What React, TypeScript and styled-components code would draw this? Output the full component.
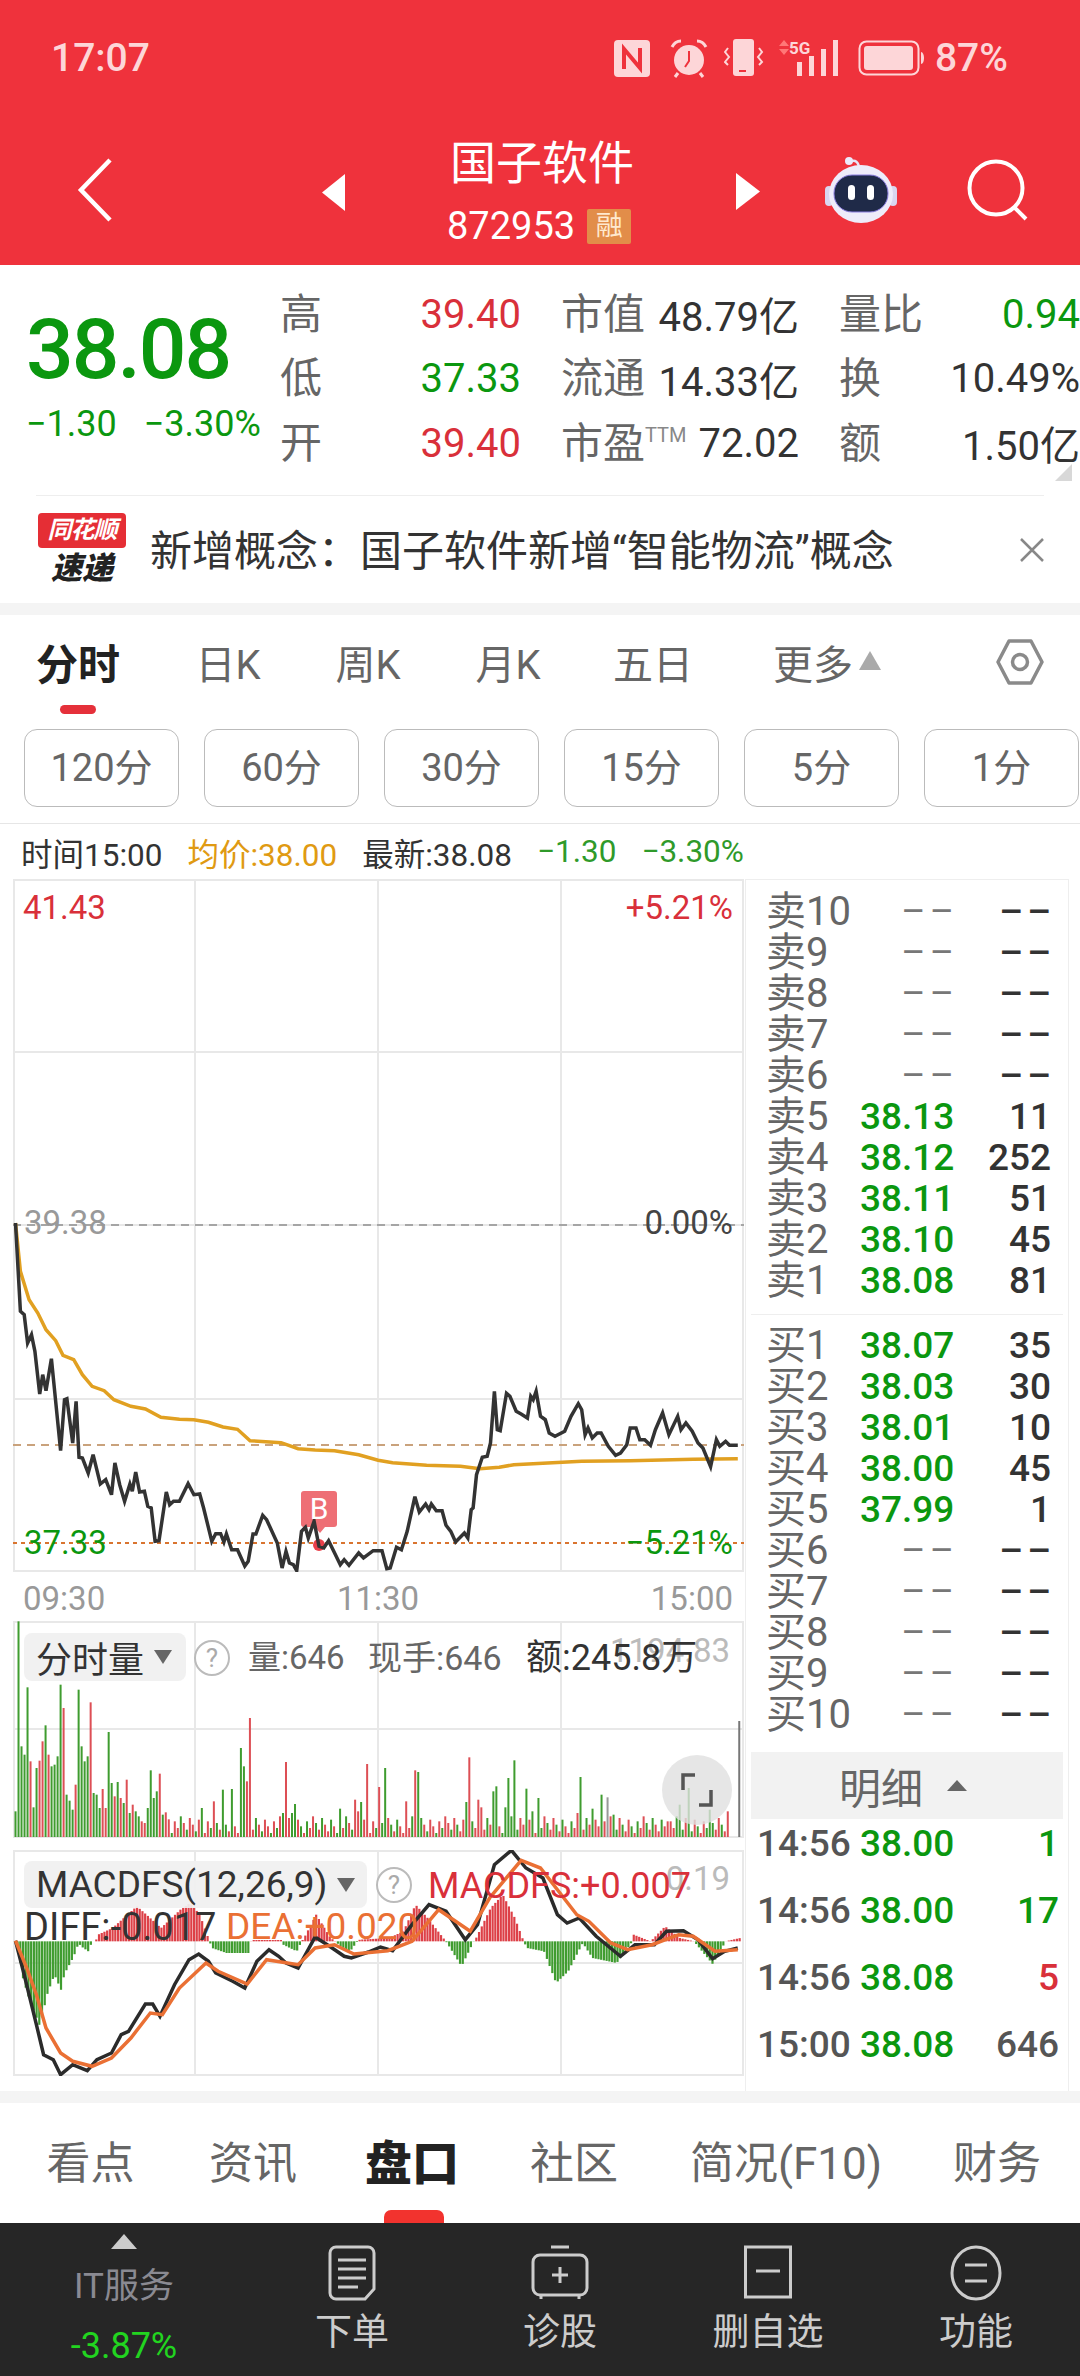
import React from "react";
import styled, { createGlobalStyle } from "styled-components";

const GREEN = "#0b970f";
const RED = "#d9303a";
const GRAY = "#666";
const FONT = `Roboto, "Noto Sans CJK SC", sans-serif`;

const GlobalStyle = createGlobalStyle`
  html, body { margin: 0; padding: 0; background: #fff; }
  body { width: 1080px; height: 2376px; overflow: hidden; font-family: ${FONT}; }
  * { box-sizing: border-box; }
`;

const pricePts = [32,315,42,580,50,590,57,675,65,650,72,700,82,828,88,770,95,818,106,722,125,998,133,845,138,842,150,975,157,850,163,1018,170,1020,182,1065,192,1010,207,1098,218,1085,230,1130,237,1035,247,1100,257,1150,268,1098,273,1120,280,1062,288,1122,298,1120,305,1165,312,1170,320,1270,328,1268,343,1122,350,1160,358,1150,370,1150,388,1097,400,1130,412,1128,420,1170,437,1270,445,1247,455,1247,462,1272,467,1248,478,1295,490,1295,505,1344,512,1330,522,1248,528,1248,542,1192,550,1205,572,1275,582,1350,590,1300,597,1335,605,1340,612,1358,622,1240,630,1228,636,1260,648,1210,658,1285,668,1290,678,1268,688,1298,702,1340,710,1325,720,1342,740,1305,750,1320,770,1298,788,1298,798,1352,805,1350,818,1288,828,1295,840,1240,856,1136,865,1182,878,1158,885,1175,890,1158,900,1178,912,1178,920,1222,930,1240,940,1272,958,1245,965,1260,972,1175,976,1170,983,1070,995,1018,1005,1015,1012,975,1020,820,1026,935,1032,938,1045,826,1052,835,1065,880,1075,888,1088,900,1095,835,1100,845,1106,820,1115,895,1125,905,1133,945,1145,955,1165,940,1178,895,1193,857,1200,875,1207,950,1213,930,1222,960,1232,945,1240,945,1255,985,1270,1012,1280,1005,1293,980,1300,930,1312,930,1320,965,1330,965,1342,982,1352,935,1367,885,1380,950,1398,895,1405,935,1415,915,1428,940,1440,975,1450,990,1466,1046,1478,965,1485,985,1497,970,1505,982,1522,982];
const avgPts = [32,315,42,460,60,545,78,585,95,635,115,668,130,712,152,725,170,770,190,805,215,818,235,845,270,865,300,873,332,898,370,904,400,905,430,913,460,927,490,934,516,968,580,974,615,992,650,996,690,998,740,1010,780,1027,810,1034,880,1042,950,1045,990,1052,1030,1048,1060,1040,1100,1037,1200,1030,1300,1028,1430,1024,1522,1022];
const diffPts = [32,1028,50,1130,75,1280,90,1370,110,1385,125,1430,150,1400,180,1418,200,1385,230,1365,250,1310,265,1300,300,1218,315,1218,330,1255,360,1160,390,1085,410,1068,430,1090,445,1125,480,1150,505,1170,530,1090,555,1055,575,1075,590,1095,615,1110,650,1017,680,1045,710,1075,725,1080,760,1062,785,1047,810,1058,850,980,885,920,920,940,960,1025,985,980,1020,800,1055,757,1085,810,1120,840,1150,950,1170,975,1195,960,1230,1015,1280,1075,1310,1040,1350,1040,1375,1000,1410,998,1440,1025,1470,1082,1495,1060,1522,1050];
const deaPts = [32,1028,55,1110,75,1190,95,1290,125,1365,150,1390,190,1405,230,1380,270,1320,310,1245,335,1250,370,1170,425,1095,450,1120,510,1158,550,1085,615,1100,650,1050,690,1040,730,1068,800,1058,850,1030,905,935,930,960,970,1000,1010,900,1075,787,1115,810,1190,950,1215,970,1260,1035,1295,1055,1345,1040,1400,1010,1430,1015,1475,1060,1522,1055];
const histEnvelope = [32,1030,45,1140,55,1190,80,1285,95,1190,110,1130,125,1180,130,1130,150,1075,160,1035,165,1045,180,1060,188,1030,195,1030,200,1010,230,990,280,925,300,950,330,990,370,935,390,915,410,950,430,1030,435,1050,465,1065,510,1065,515,1030,520,1026,580,1026,582,1040,610,1060,620,1030,625,1020,650,950,680,1020,690,1030,700,1045,720,1060,735,1030,740,1025,800,1020,830,1000,855,920,880,960,915,1025,920,1035,950,1105,975,1030,980,1020,1010,930,1035,890,1060,960,1078,1030,1085,1050,1120,1060,1145,1155,1170,1120,1200,1035,1220,1080,1270,1095,1300,1035,1305,1010,1340,1030,1370,985,1400,1020,1430,1030,1435,1040,1468,1098,1495,1030,1500,1028,1525,1020];
const volPeaks: [string, number, number][] = [["g",38,70],["g",44,445],["g",50,470],["g",57,268],["r",62,490],["g",68,628],["g",75,510],["r",81,488],["r",88,430],["g",94,382],["r",100,470],["g",106,505],["g",112,500],["g",119,475],["g",125,260],["r",131,330],["g",137,590],["g",143,608],["g",150,635],["r",156,560],["g",162,275],["g",168,445],["g",175,490],["g",181,475],["r",187,313],["g",193,585],["g",199,590],["g",205,630],["r",212,573],["r",218,630],["g",225,402],["g",231,555],["r",237,595],["g",243,552],["r",250,600],["g",256,615],["r",262,545],["g",268,645],["r",275,620],["g",281,640],["g",287,655],["r",293,670],["r",300,675],["g",306,630],["g",312,517],["g",318,600],["g",324,580],["r",330,527],["g",336,650],["r",343,643],["g",416,630],["r",441,610],["g",460,575],["g",478,573],["g",497,450],["g",503,505],["r",510,550],["r",517,360],["g",584,645],["r",591,492],["g",603,645],["g",610,618],["g",702,632],["r",733,605],["r",740,640],["g",746,612],["r",758,498],["r",784,567],["g",796,510],["r",840,610],["r",857,517],["g",863,522],["g",964,612],["r",970,478],["r",987,605],["r",995,628],["g",1018,580],["g",1024,565],["g",1044,628],["g",1050,540],["g",1063,487],["g",1087,572],["g",1100,640],["g",1113,600],["r",1192,645],["g",1200,537],["g",1225,632],["g",1244,590],["n",1255,598],["g",1268,650],["r",1380,670],["g",1403,620],["g",1423,570],["g",1466,635],["r",1500,640]];

const zx = (x: number) => x / 2.063 - 13;
const toPath = (pts: number[], dy: number) => {
  let out = "";
  for (let i = 0; i < pts.length; i += 2) {
    out += `${zx(pts[i]).toFixed(1)},${(pts[i + 1] / 3 + dy).toFixed(1)} `;
  }
  return out;
};

const volBars = (() => {
  const map = new Map<number, [string, number]>();
  volPeaks.forEach(([c, x, y]) => map.set(Math.round((x - 32) / 6.2), [c, y]));
  const bars: { x: number; y: number; c: string }[] = [];
  for (let i = 0; i < 238; i++) {
    const x = 32 + i * 6.2;
    const p = map.get(i);
    const h = (i * 37) % 11;
    const small = x < 350 ? 640 + h * 4 : 655 + h * 5;
    const c = p ? p[0] : (i * 13) % 5 < 2 ? "g" : "r";
    bars.push({ x, y: p ? p[1] : small, c });
  }
  return bars;
})();
const volColor: Record<string, string> = { g: "#3f9c2f", r: "#dd4f55", n: "#999" };

const histBars = (() => {
  const bars: { x: number; y: number }[] = [];
  for (let x = 34; x < 1525; x += 5.6) {
    let j = 0;
    while (j < histEnvelope.length - 4 && histEnvelope[j + 2] < x) j += 2;
    const t = (x - histEnvelope[j]) / (histEnvelope[j + 2] - histEnvelope[j]);
    bars.push({ x, y: histEnvelope[j + 1] + (histEnvelope[j + 3] - histEnvelope[j + 1]) * Math.min(1, Math.max(0, t)) });
  }
  return bars;
})();

const Page = styled.div`
  width: 1080px;
  height: 2376px;
  display: flex;
  flex-direction: column;
  overflow: hidden;
  background: #fff;
`;

const Header = styled.header`
  height: 265px;
  background: #ef323c;
  flex: none;
`;

const StatusBar = styled.div`
  height: 116px;
  padding: 0 72px 0 51px;
  display: flex;
  align-items: center;
  justify-content: space-between;
  color: #fdd6d8;
  font-size: 39px;
  font-weight: 500;
`;

const StatusIcons = styled.div`
  display: flex;
  align-items: center;
  gap: 9px;
  svg { display: block; }
`;

const StatusIcon = styled.svg<{ $gap: number }>`
  margin-left: ${(p) => p.$gap}px;
`;

const NavRow = styled.div`
  height: 150px;
  display: flex;
  align-items: center;
  padding-left: 77px;
`;

const NavIcon = styled.svg<{ $gap: number; $up?: number }>`
  flex: none;
  display: block;
  margin-left: ${(p) => p.$gap}px;
  margin-top: ${(p) => p.$up ?? 0}px;
`;

const TitleBlock = styled.div`
  flex: none;
  width: 190px;
  margin-left: 102px;
  color: #fff;
`;

const Title = styled.div`
  font-size: 46px;
  line-height: 60px;
  text-align: center;
  white-space: nowrap;
`;

const CodeRow = styled.div`
  display: flex;
  align-items: center;
  gap: 12px;
  font-size: 38px;
  line-height: 46px;
  margin-top: 10px;
`;

const Badge = styled.span`
  width: 44px;
  height: 35px;
  background: #e28d49;
  border-radius: 2px;
  font-size: 27px;
  line-height: 35px;
  text-align: center;
  color: #ffe9cf;
`;

const Quote = styled.section`
  height: 230px;
  flex: none;
  position: relative;
  display: flex;
  padding-top: 17px;
`;

const BigPrice = styled.div`
  width: 280px;
  flex: none;
  padding-left: 26px;
`;

const BigNum = styled.div`
  color: ${GREEN};
  font-size: 84px;
  font-weight: 500;
  line-height: 100px;
  margin-top: 18px;
  letter-spacing: -2px;
`;

const Change = styled.div`
  display: flex;
  gap: 27px;
  color: ${GREEN};
  font-size: 36px;
  line-height: 40px;
  margin-top: 4px;
  white-space: nowrap;
`;

const StatGrid = styled.div`
  display: grid;
  grid-template-columns: 241px 238px 241px;
  grid-auto-rows: 64.5px;
  column-gap: 40px;
  width: 800px;
`;

const Stat = styled.div`
  display: flex;
  align-items: center;
  justify-content: space-between;
  white-space: nowrap;
`;

const StatLabel = styled.span`
  color: ${GRAY};
  font-size: 42px;
  padding-bottom: 8px;
`;

const Ttm = styled.sup`
  font-size: 20px;
  color: #888;
  vertical-align: 16px;
  line-height: 0;
`;

const StatValue = styled.span<{ $color?: string }>`
  color: ${(p) => p.$color ?? "#333"};
  font-size: 40px;
`;

const Corner = styled.div`
  position: absolute;
  right: 8px;
  bottom: 14px;
  width: 0;
  height: 0;
  border-left: 17px solid transparent;
  border-bottom: 17px solid #d8d8d8;
`;

const Notice = styled.div`
  margin: 0 36px;
  height: 108px;
  border-top: 1px solid #eee;
  display: flex;
  align-items: center;
  flex: none;
  position: relative;
`;

const LogoBox = styled.div`
  width: 90px;
  margin-left: 1px;
  flex: none;
  display: flex;
  flex-direction: column;
  align-items: center;
`;

const LogoTop = styled.div`
  width: 88px;
  height: 35px;
  border-radius: 4px;
  background: #e52e35;
  color: #fff;
  font-size: 24px;
  line-height: 35px;
  font-weight: 700;
  font-style: italic;
  text-align: center;
  white-space: nowrap;
  letter-spacing: -1px;
`;

const LogoBottom = styled.div`
  font-size: 31px;
  line-height: 36px;
  font-weight: 900;
  font-style: italic;
  color: #222;
  margin-top: 3px;
`;

const NoticeText = styled.div`
  margin-left: 23px;
  font-size: 42px;
  color: #333;
  white-space: nowrap;
  flex: 1;
  margin-top: -4px;
`;

const Close = styled.svg`
  flex: none;
  margin-right: 0;
`;

const Band = styled.div<{ $h: number }>`
  height: ${(p) => p.$h}px;
  background: #f4f4f4;
  flex: none;
`;

const Gap = styled.div`
  height: 12px;
  flex: none;
`;

const PeriodTabs = styled.nav`
  height: 114px;
  flex: none;
  position: relative;
  display: flex;
  align-items: flex-start;
  padding-top: 22px;
`;

const PeriodTab = styled.div<{ $w: number; $active?: boolean; $shift?: number }>`
  width: ${(p) => p.$w}px;
  flex: none;
  text-align: center;
  font-size: ${(p) => (p.$active ? 42 : 40)}px;
  line-height: 58px;
  color: ${(p) => (p.$active ? "#222" : GRAY)};
  font-weight: ${(p) => (p.$active ? 700 : 400)};
  white-space: nowrap;
  padding-left: ${(p) => p.$shift ?? 0}px;
`;

const MoreArrow = styled.span`
  display: inline-block;
  width: 0;
  height: 0;
  margin-left: 6px;
  vertical-align: 9px;
  border-left: 11px solid transparent;
  border-right: 11px solid transparent;
  border-bottom: 19px solid #aaa;
`;

const ActiveMark = styled.div`
  position: absolute;
  left: 60px;
  top: 90px;
  width: 36px;
  height: 9px;
  border-radius: 5px;
  background: #e5303a;
`;

const HexIcon = styled.svg`
  position: absolute;
  left: 996px;
  top: 24px;
`;

const Intervals = styled.div`
  display: flex;
  gap: 25px;
  padding-left: 24px;
  height: 95px;
  flex: none;
  border-bottom: 1px solid #e6e6e6;
  width: 1080px;
`;

const IntervalBtn = styled.div`
  flex: none;
  width: 155px;
  height: 78px;
  border: 1px solid #bbb;
  border-radius: 13px;
  color: ${GRAY};
  font-size: 38px;
  line-height: 76px;
  text-align: center;
`;

const InfoRow = styled.div`
  height: 55px;
  flex: none;
  display: flex;
  align-items: center;
  padding-left: 21px;
  font-size: 31.5px;
  color: #333;
  white-space: nowrap;
`;

const InfoItem = styled.span<{ $color?: string; $gap?: number }>`
  color: ${(p) => p.$color ?? "#333"};
  margin-right: ${(p) => p.$gap ?? 25}px;
`;

const Body = styled.div`
  flex: 1;
  display: flex;
  padding-left: 13px;
  min-height: 0;
`;

const ChartColumn = styled.div`
  width: 731px;
  flex: none;
  display: flex;
  flex-direction: column;
`;

const Panel = styled.div<{ $h: number }>`
  position: relative;
  height: ${(p) => p.$h}px;
  flex: none;
  svg.plot { display: block; position: absolute; left: 0; top: 0; }
`;

const Tag = styled.span<{ $left?: number; $right?: number; $top: number; $color: string; $size?: number }>`
  position: absolute;
  ${(p) => (p.$left !== undefined ? `left: ${p.$left}px;` : "")}
  ${(p) => (p.$right !== undefined ? `right: ${p.$right}px;` : "")}
  top: ${(p) => p.$top}px;
  color: ${(p) => p.$color};
  font-size: ${(p) => p.$size ?? 33}px;
  line-height: 40px;
  white-space: nowrap;
`;

const AxisRow = styled.div`
  height: 49px;
  flex: none;
  display: flex;
  justify-content: space-between;
  align-items: center;
  padding: 4px 11px 0 10px;
  color: #999;
  font-size: 33px;
`;

const DropDown = styled.div<{ $top: number; $w: number; $h: number; $size: number }>`
  position: absolute;
  left: 11px;
  top: ${(p) => p.$top}px;
  width: ${(p) => p.$w}px;
  height: ${(p) => p.$h}px;
  background: rgba(240, 240, 240, 0.92);
  border-radius: 8px;
  display: flex;
  align-items: center;
  padding-left: 12px;
  color: #333;
  font-size: ${(p) => p.$size}px;
  white-space: nowrap;
`;

const DropCaret = styled.span`
  width: 0;
  height: 0;
  margin-left: 10px;
  border-left: 9px solid transparent;
  border-right: 9px solid transparent;
  border-top: 14px solid #666;
`;

const Help = styled.span<{ $left: number; $top: number }>`
  position: absolute;
  left: ${(p) => p.$left}px;
  top: ${(p) => p.$top}px;
  width: 36px;
  height: 36px;
  border: 2px solid #bbb;
  border-radius: 50%;
  color: #aaa;
  font-size: 26px;
  line-height: 32px;
  text-align: center;
  background: #fff;
`;

const Expand = styled.div`
  position: absolute;
  left: 649px;
  top: 134px;
  width: 70px;
  height: 70px;
  border-radius: 50%;
  background: rgba(224, 224, 224, 0.8);
  display: flex;
  align-items: center;
  justify-content: center;
`;

const Book = styled.aside`
  width: 324px;
  margin-left: 1px;
  flex: none;
  border: 1px solid #eee;
  border-bottom: none;
  display: flex;
  flex-direction: column;
  padding: 11px 5px 0;
`;

const BookGroup = styled.div<{ $line?: boolean }>`
  ${(p) => (p.$line ? "border-top: 1px solid #eee; margin-top: 13px; padding-top: 10px;" : "")}
`;

const BookRow = styled.div`
  height: 41px;
  display: grid;
  grid-template-columns: 94px 94px 1fr;
  align-items: center;
  padding: 0 12px 0 15px;
  font-size: 37px;
  line-height: 41px;
  white-space: nowrap;
`;

const BookLabel = styled.span`
  color: ${GRAY};
  font-size: 40px;
`;

const BookPrice = styled.span<{ $dash?: boolean }>`
  color: ${(p) => (p.$dash ? "#777" : GREEN)};
  text-align: right;
  font-weight: ${(p) => (p.$dash ? 400 : 500)};
  word-spacing: ${(p) => (p.$dash ? "-5px" : "0")};
`;

const BookQty = styled.span<{ $dash?: boolean }>`
  color: #333;
  text-align: right;
  font-weight: 500;
  word-spacing: ${(p) => (p.$dash ? "-5px" : "0")};
`;

const DetailHead = styled.div`
  height: 67px;
  margin-top: 17px;
  background: #f2f2f2;
  color: ${GRAY};
  font-size: 42px;
  display: flex;
  align-items: center;
  justify-content: center;
  gap: 24px;
  padding-right: 8px;
  flex: none;
`;

const HeadCaret = styled.span`
  width: 0;
  height: 0;
  border-left: 10px solid transparent;
  border-right: 10px solid transparent;
  border-bottom: 11px solid #666;
`;

const DetailList = styled.div`
  margin-top: -9px;
`;

const DetailRow = styled.div`
  height: 67px;
  display: flex;
  align-items: center;
  padding: 0 4px 0 6px;
  font-size: 37px;
  font-weight: 500;
  white-space: nowrap;
`;

const DetailTime = styled.span`
  color: #555;
  width: 103px;
`;

const DetailPrice = styled.span`
  color: ${GREEN};
`;

const DetailQty = styled.span<{ $color: string }>`
  color: ${(p) => p.$color};
  margin-left: auto;
`;

const SubTabs = styled.nav`
  height: 120px;
  flex: none;
  position: relative;
  display: flex;
  align-items: flex-start;
  padding-top: 31px;
`;

const SubTab = styled.div<{ $w: number; $active?: boolean }>`
  width: ${(p) => p.$w}px;
  flex: none;
  text-align: center;
  font-size: ${(p) => (p.$active ? 47 : 44)}px;
  line-height: 60px;
  color: ${(p) => (p.$active ? "#222" : GRAY)};
  font-weight: ${(p) => (p.$active ? 900 : 400)};
  white-space: nowrap;
`;

const SubMark = styled.div`
  position: absolute;
  left: 384px;
  bottom: 0;
  width: 60px;
  height: 13px;
  border-radius: 7px 7px 0 0;
  background: #f2332e;
`;

const BottomBar = styled.footer`
  height: 153px;
  flex: none;
  background: #262626;
  display: flex;
`;

const SectorCell = styled.div`
  width: 248px;
  flex: none;
  display: flex;
  flex-direction: column;
  align-items: center;
  padding-top: 11px;
`;

const SectorArrow = styled.div`
  width: 0;
  height: 0;
  border-left: 13px solid transparent;
  border-right: 13px solid transparent;
  border-bottom: 15px solid #ccc;
`;

const SectorName = styled.div`
  color: #8a8a92;
  font-size: 35px;
  line-height: 44px;
  margin-top: 16px;
`;

const SectorPct = styled.div`
  color: #22d420;
  font-size: 36px;
  line-height: 40px;
  margin-top: 17px;
`;

const Action = styled.div`
  width: 208px;
  flex: none;
  display: flex;
  flex-direction: column;
  align-items: center;
  padding-top: 22px;
  color: #ccc;
  font-size: 37px;
  line-height: 48px;
  svg { display: block; height: 56px; margin-bottom: 8px; }
`;

const sells = [["卖10","--","--"],["卖9","--","--"],["卖8","--","--"],["卖7","--","--"],["卖6","--","--"],["卖5","38.13","11"],["卖4","38.12","252"],["卖3","38.11","51"],["卖2","38.10","45"],["卖1","38.08","81"]];
const buys = [["买1","38.07","35"],["买2","38.03","30"],["买3","38.01","10"],["买4","38.00","45"],["买5","37.99","1"],["买6","--","--"],["买7","--","--"],["买8","--","--"],["买9","--","--"],["买10","--","--"]];
const details: [string, string, string, string][] = [["14:56","38.00","1",GREEN],["14:56","38.00","17",GREEN],["14:56","38.08","5",RED],["15:00","38.08","646","#555"]];

function BookLines({ rows }: { rows: string[][] }) {
  return (
    <>
      {rows.map((r) => (
        <BookRow key={r[0]}>
          <BookLabel>{r[0]}</BookLabel>
          <BookPrice $dash={r[1] === "--"}>{r[1] === "--" ? "– –" : r[1]}</BookPrice>
          <BookQty $dash={r[2] === "--"}>{r[2] === "--" ? "– –" : r[2]}</BookQty>
        </BookRow>
      ))}
    </>
  );
}

function Grid({ w, h, rows }: { w: number; h: number; rows: number[] }) {
  return (
    <g stroke="#e8e8e8" strokeWidth="2" fill="none">
      <rect x="1" y="1" width={w - 2} height={h - 2} />
      {[182, 365, 548].map((x) => <line key={x} x1={x} y1="0" x2={x} y2={h} />)}
      {rows.map((y) => <line key={y} x1="0" y1={y} x2={w} y2={y} />)}
    </g>
  );
}

function Robot() {
  return (
    <NavIcon $gap={65} $up={-2} width="72" height="68" viewBox="0 0 72 68">
      <path d="M25 6c5-3 9 0 9 7" stroke="#e7e4f8" strokeWidth="2.5" fill="none" />
      <circle cx="24" cy="5" r="4" fill="#ece9fa" />
      <rect x="0" y="30" width="8" height="20" rx="4" fill="#d9d6f0" />
      <rect x="64" y="30" width="8" height="20" rx="4" fill="#d9d6f0" />
      <ellipse cx="36" cy="38" rx="32" ry="29" fill="#eeecfa" />
      <rect x="9" y="19" width="54" height="37" rx="18" fill="#1f2a48" stroke="#8c7fe0" strokeWidth="1" />
      <rect x="23" y="29" width="7" height="15" rx="3.5" fill="#fff" />
      <rect x="42" y="29" width="7" height="15" rx="3.5" fill="#fff" />
    </NavIcon>
  );
}

export default function App() {
  return (
    <Page>
      <GlobalStyle />
      <Header>
        <StatusBar>
          <span>17:07</span>
          <StatusIcons>
            <StatusIcon $gap={0} width="36" height="37" viewBox="0 0 36 37">
              <rect width="36" height="37" rx="4" fill="#fdd6d8" />
              <path d="M10 29V9l16 19V8" stroke="#ef323c" strokeWidth="4" fill="none" />
            </StatusIcon>
            <StatusIcon $gap={10} width="40" height="40" viewBox="0 0 40 40">
              <circle cx="20" cy="22" r="15" fill="#fdd6d8" />
              <path d="M20 13v10l-4 6" stroke="#ef323c" strokeWidth="2" fill="none" />
              <path d="M3 9c2-4 6-6 9-6M37 9c-2-4-6-6-9-6M9 35l-3 4M31 35l3 4" stroke="#fdd6d8" strokeWidth="3" fill="none" />
            </StatusIcon>
            <StatusIcon $gap={6} width="40" height="38" viewBox="0 0 40 38">
              <rect x="9" y="0" width="21" height="37" rx="3" fill="#fdd6d8" />
              <path d="M15 32h7" stroke="#ef323c" strokeWidth="2" />
              <path d="M4 9l-3 4 4 5-4 5 3 3M35 9l3 4-4 5 4 5-3 3" stroke="#fdd6d8" strokeWidth="2" fill="none" />
            </StatusIcon>
            <StatusIcon $gap={1} width="66" height="38" viewBox="0 0 66 38">
              <path d="M5 7l5-6 5 6zM5 10l5 6 5-6z" fill="#f77" />
              <text x="15" y="15" fontSize="17" fontWeight="700" fontFamily="Roboto" fill="#fdd6d8">5G</text>
              <rect x="23" y="23" width="5" height="14" fill="#fdd6d8" />
              <rect x="35" y="17" width="5" height="20" fill="#fdd6d8" />
              <rect x="47" y="10" width="5" height="27" fill="#fdd6d8" />
              <rect x="59" y="1" width="5" height="36" fill="#fdd6d8" />
            </StatusIcon>
            <StatusIcon $gap={9} width="68" height="36" viewBox="0 0 68 36">
              <rect x="1.5" y="1.5" width="59" height="33" rx="7" fill="none" stroke="#fdd6d8" strokeWidth="2" />
              <rect x="6" y="6" width="49" height="24" rx="3" fill="#fdd6d8" />
              <path d="M63 12c4 0 4 12 0 12z" fill="#fdd6d8" />
            </StatusIcon>
            <span>87%</span>
          </StatusIcons>
        </StatusBar>
        <NavRow>
          <NavIcon $gap={0} $up={-2} width="36" height="64" viewBox="0 0 36 64">
            <path d="M33 2L4 32l29 30" stroke="#fff" strokeWidth="4.5" fill="none" />
          </NavIcon>
          <NavIcon $gap={209} $up={2} width="23" height="37" viewBox="0 0 23 37">
            <path d="M23 0L0 18.5 23 37z" fill="#fff" />
          </NavIcon>
          <TitleBlock>
            <Title>国子软件</Title>
            <CodeRow>872953<Badge>融</Badge></CodeRow>
          </TitleBlock>
          <NavIcon $gap={99} $up={0} width="24" height="37" viewBox="0 0 24 37">
            <path d="M0 0l24 18.5L0 37z" fill="#fff" />
          </NavIcon>
          <Robot />
          <NavIcon $gap={70} $up={-2} width="62" height="62" viewBox="0 0 62 62">
            <circle cx="29" cy="29" r="26.5" stroke="#fff" strokeWidth="4" fill="none" />
            <path d="M47 48l12 12" stroke="#fff" strokeWidth="4" />
          </NavIcon>
        </NavRow>
      </Header>

      <Quote>
        <BigPrice>
          <BigNum>38.08</BigNum>
          <Change><span>−1.30</span><span>−3.30%</span></Change>
        </BigPrice>
        <StatGrid>
          <Stat><StatLabel>高</StatLabel><StatValue $color={RED}>39.40</StatValue></Stat>
          <Stat><StatLabel>市值</StatLabel><StatValue>48.79亿</StatValue></Stat>
          <Stat><StatLabel>量比</StatLabel><StatValue $color={GREEN}>0.94</StatValue></Stat>
          <Stat><StatLabel>低</StatLabel><StatValue $color={GREEN}>37.33</StatValue></Stat>
          <Stat><StatLabel>流通</StatLabel><StatValue>14.33亿</StatValue></Stat>
          <Stat><StatLabel>换</StatLabel><StatValue>10.49%</StatValue></Stat>
          <Stat><StatLabel>开</StatLabel><StatValue $color={RED}>39.40</StatValue></Stat>
          <Stat><StatLabel>市盈<Ttm>TTM</Ttm></StatLabel><StatValue>72.02</StatValue></Stat>
          <Stat><StatLabel>额</StatLabel><StatValue>1.50亿</StatValue></Stat>
        </StatGrid>
        <Corner />
      </Quote>

      <Notice>
        <LogoBox>
          <LogoTop>同花顺</LogoTop>
          <LogoBottom>速递</LogoBottom>
        </LogoBox>
        <NoticeText>新增概念：国子软件新增“智能物流”概念</NoticeText>
        <Close width="24" height="24" viewBox="0 0 24 24">
          <path d="M1 1l22 22M23 1L1 23" stroke="#888" strokeWidth="2.5" />
        </Close>
      </Notice>
      <Band $h={12} />

      <PeriodTabs>
        <PeriodTab $w={156} $active>分时</PeriodTab>
        <PeriodTab $w={144}>日K</PeriodTab>
        <PeriodTab $w={136}>周K</PeriodTab>
        <PeriodTab $w={144}>月K</PeriodTab>
        <PeriodTab $w={146}>五日</PeriodTab>
        <PeriodTab $w={170} $shift={32}>更多<MoreArrow /></PeriodTab>
        <ActiveMark />
        <HexIcon width="48" height="46" viewBox="0 0 48 46">
          <path d="M13 2h22l11 21-11 21H13L2 23z" stroke="#8a8a8a" strokeWidth="3.5" fill="none" strokeLinejoin="round" />
          <circle cx="24" cy="23" r="7.5" stroke="#8a8a8a" strokeWidth="3.5" fill="none" />
        </HexIcon>
      </PeriodTabs>

      <Intervals>
        {["120分", "60分", "30分", "15分", "5分", "1分"].map((t) => (
          <IntervalBtn key={t}>{t}</IntervalBtn>
        ))}
      </Intervals>

      <InfoRow>
        <InfoItem>时间15:00</InfoItem>
        <InfoItem $color="#e09a12">均价:38.00</InfoItem>
        <InfoItem>最新:38.08</InfoItem>
        <InfoItem $color="#2f9a2a">−1.30</InfoItem>
        <InfoItem $color="#2f9a2a">−3.30%</InfoItem>
      </InfoRow>

      <Body>
        <ChartColumn>
          <Panel $h={693}>
            <svg className="plot" width="731" height="693" viewBox="0 0 731 693">
              <Grid w={731} h={693} rows={[173, 346, 520]} />
              <line x1="0" y1="346" x2="731" y2="346" stroke="#a5a5a5" strokeWidth="2" strokeDasharray="8 6" />
              <line x1="0" y1="566" x2="731" y2="566" stroke="#c9a27c" strokeWidth="2" strokeDasharray="8 6" />
              <line x1="0" y1="664" x2="731" y2="664" stroke="#d9742f" strokeWidth="2" strokeDasharray="4 4" />
              <polyline points={toPath(avgPts, 239)} fill="none" stroke="#e1a021" strokeWidth="3.5" />
              <path d="M288 615a3 3 0 0 1 3-3h30a3 3 0 0 1 3 3v30a3 3 0 0 1-3 3h-9l-5 6-5-6h-11a3 3 0 0 1-3-3z" fill="#ee6f75" />
              <circle cx="306" cy="666" r="6" fill="#e9404a" />
              <polyline points={toPath(pricePts, 239)} fill="none" stroke="#333" strokeWidth="3.5" />
            </svg>
            <Tag $left={10} $top={9} $color={RED}>41.43</Tag>
            <Tag $right={11} $top={9} $color={RED}>+5.21%</Tag>
            <Tag $left={11} $top={324} $color="#999">39.38</Tag>
            <Tag $right={11} $top={324} $color="#444">0.00%</Tag>
            <Tag $left={11} $top={644} $color={GREEN}>37.33</Tag>
            <Tag $right={11} $top={644} $color={GREEN}>−5.21%</Tag>
            <Tag $left={288} $top={610} $color="#fff" $size={30} style={{ width: 36, textAlign: "center" }}>B</Tag>
          </Panel>
          <AxisRow><span>09:30</span><span>11:30</span><span>15:00</span></AxisRow>
          <Panel $h={217}>
            <svg className="plot" width="731" height="217" viewBox="0 0 731 217">
              <Grid w={731} h={217} rows={[108]} />
              {volBars.map((b, i) => (
                <rect key={i} x={zx(b.x) - 1} y={b.y / 3 - 23} width="2" height={216 - (b.y / 3 - 23)} fill={volColor[b.c]} />
              ))}
              <rect x={zx(1523)} y={100} width="2" height="116" fill="#777" />
            </svg>
            <Tag $right={14} $top={10} $color="#bbb">1194.83</Tag>
            <DropDown $top={12} $w={162} $h={48} $size={36}>分时量<DropCaret /></DropDown>
            <Help $left={181} $top={19}>?</Help>
            <Tag $left={235} $top={17} $color={GRAY}>量:646</Tag>
            <Tag $left={355} $top={17} $color={GRAY} $size={34}>现手:646</Tag>
            <Tag $left={513} $top={17} $color="#333" $size={36}>额:245.8万</Tag>
            <Expand>
              <svg width="34" height="36" viewBox="0 0 34 36">
                <path d="M15 3H3v15M19 33h12V18" stroke="#555" strokeWidth="3.5" fill="none" />
              </svg>
            </Expand>
          </Panel>
          <Gap />
          <Panel $h={226}>
            <svg className="plot" width="731" height="226" viewBox="0 0 731 226">
              <Grid w={731} h={226} rows={[113]} />
              {histBars.map((b, i) => {
                const y = b.y / 3 - 252;
                const zero = 1030 / 3 - 252;
                return (
                  <rect key={i} x={zx(b.x)} y={Math.min(y, zero)} width="2.2" height={Math.abs(y - zero)} fill={y < zero ? "#dd4047" : "#3f9c2f"} />
                );
              })}
              <polyline points={toPath(diffPts, -252)} fill="none" stroke="#2b2b2b" strokeWidth="3.5" />
              <polyline points={toPath(deaPts, -252)} fill="none" stroke="#ea7034" strokeWidth="3.5" />
            </svg>
            <Tag $right={14} $top={9} $color="#bbb">0.19</Tag>
            <DropDown $top={11} $w={343} $h={47} $size={37}>MACDFS(12,26,9)<DropCaret /></DropDown>
            <Help $left={363} $top={17}>?</Help>
            <Tag $left={415} $top={16} $color={RED} $size={36}>MACDFS:+0.007</Tag>
            <Tag $left={11} $top={57} $color="#333" $size={38}>DIFF:-0.017</Tag>
            <Tag $left={213} $top={57} $color="#ea7034" $size={37}>DEA:+0.020</Tag>
          </Panel>
        </ChartColumn>
        <Book>
          <BookGroup><BookLines rows={sells} /></BookGroup>
          <BookGroup $line><BookLines rows={buys} /></BookGroup>
          <DetailHead>明细<HeadCaret /></DetailHead>
          <DetailList>
            {details.map((d, i) => (
              <DetailRow key={i}>
                <DetailTime>{d[0]}</DetailTime>
                <DetailPrice>{d[1]}</DetailPrice>
                <DetailQty $color={d[3]}>{d[2]}</DetailQty>
              </DetailRow>
            ))}
          </DetailList>
        </Book>
      </Body>

      <Band $h={12} />
      <SubTabs>
        <SubTab $w={181}>看点</SubTab>
        <SubTab $w={144}>资讯</SubTab>
        <SubTab $w={174} $active>盘口</SubTab>
        <SubTab $w={150}>社区</SubTab>
        <SubTab $w={274}>简况(F10)</SubTab>
        <SubTab $w={148}>财务</SubTab>
        <SubMark />
      </SubTabs>
      <BottomBar>
        <SectorCell>
          <SectorArrow />
          <SectorName>IT服务</SectorName>
          <SectorPct>-3.87%</SectorPct>
        </SectorCell>
        <Action>
          <svg width="48" height="56" viewBox="0 0 48 56" fill="none" stroke="#ccc" strokeWidth="3">
            <path d="M8 2h32a6 6 0 0 1 6 6v36l-9 10H8a6 6 0 0 1-6-6V8a6 6 0 0 1 6-6z" />
            <path d="M10 15h28M10 24h28M10 33h28M10 42h20" />
          </svg>
          下单
        </Action>
        <Action>
          <svg width="58" height="56" viewBox="0 0 58 56" fill="none" stroke="#ccc" strokeWidth="3">
            <path d="M20 2h18" />
            <rect x="2" y="10" width="54" height="40" rx="7" />
            <path d="M29 22v16M21 30h16M10 50v4M48 50v4" />
          </svg>
          诊股
        </Action>
        <Action>
          <svg width="48" height="56" viewBox="0 0 48 56" fill="none" stroke="#ccc" strokeWidth="3">
            <rect x="1.5" y="2" width="45" height="50" />
            <path d="M12 26h24" />
          </svg>
          删自选
        </Action>
        <Action>
          <svg width="52" height="56" viewBox="0 0 52 56" fill="none" stroke="#ccc" strokeWidth="3">
            <ellipse cx="26" cy="28" rx="24" ry="26" />
            <path d="M15 20h22M15 36h22" />
          </svg>
          功能
        </Action>
      </BottomBar>
    </Page>
  );
}
